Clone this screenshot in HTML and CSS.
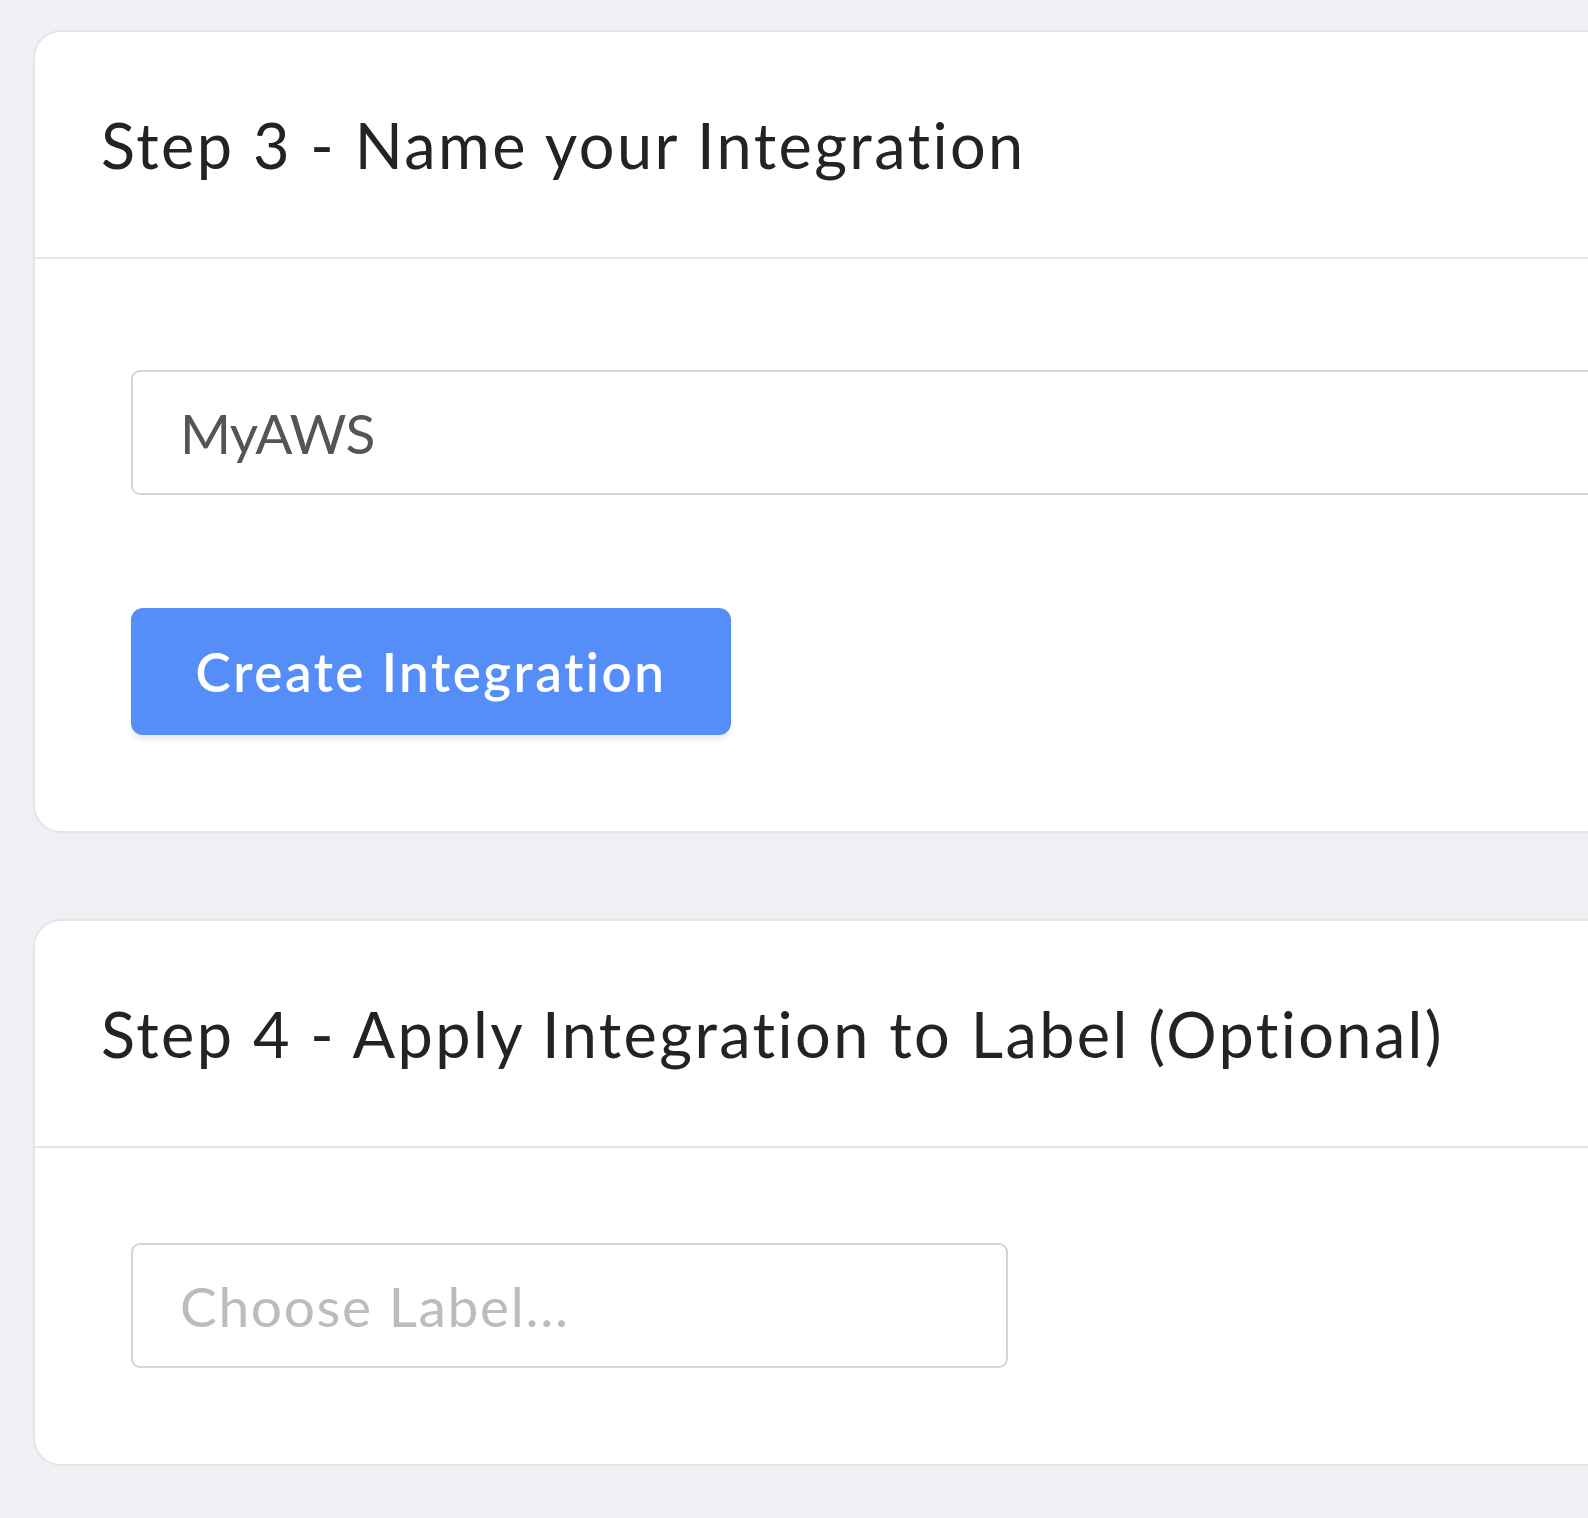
FILE: index.html
```html
<!DOCTYPE html>
<html lang="en">
<head>
<meta charset="utf-8">
<title>Integration</title>
<link rel="stylesheet" href="styles.css">
</head>
<body>
<div class="page">
  <section class="card">
    <header class="card-header">
      <h2 class="card-title">Step 3 - Name your Integration</h2>
    </header>
    <div class="card-body body-name">
      <div class="field field-wide">
        <span class="field-value">MyAWS</span>
      </div>
      <button class="btn-primary" type="button">Create Integration</button>
    </div>
  </section>
  <section class="card">
    <header class="card-header">
      <h2 class="card-title">Step 4 - Apply Integration to Label (Optional)</h2>
    </header>
    <div class="card-body body-label">
      <div class="field field-label">
        <span class="field-placeholder">Choose Label...</span>
      </div>
    </div>
  </section>
</div>
</body>
</html>
```
FILE: styles.css
```css
html, body {
  margin: 0;
  padding: 0;
}
body {
  background: #eff0f4;
  font-family: "Lato", "Liberation Sans", sans-serif;
  font-variant-ligatures: none;
  overflow: hidden;
  width: 1588px;
  height: 1518px;
}
.page {
  display: flex;
  flex-direction: column;
  gap: 86px;
  padding: 30px 0 0 33px;
}
.card {
  width: 1640px;
  background: #ffffff;
  border: 2px solid #e4e5e8;
  border-radius: 28px;
  box-sizing: border-box;
}
.card-header {
  height: 225px;
  display: flex;
  align-items: center;
  padding-left: 66px;
  border-bottom: 2px solid #e4e5e8;
}
.card-title {
  margin: 0;
  font-size: 63px;
  font-weight: 400;
  color: #222326;
  letter-spacing: 2.4px;
  font-variant-ligatures: none;
}
.card-body {
  padding: 0 0 96px 96px;
  display: flex;
  flex-direction: column;
  align-items: flex-start;
}
.body-name {
  padding-top: 111px;
  gap: 113px;
}
.body-label {
  padding-top: 95px;
}
.field {
  height: 125px;
  box-sizing: border-box;
  border: 2px solid #d5d5d7;
  border-radius: 9px;
  display: flex;
  align-items: center;
  padding-left: 47px;
  font-size: 55px;
}
.field-wide {
  width: 1520px;
}
.field-label {
  width: 877px;
}
.field-value {
  color: #555555;
  letter-spacing: -0.6px;
}
.field-placeholder {
  color: #bcbcbc;
  letter-spacing: 1.7px;
}
.btn-primary {
  width: 600px;
  height: 127px;
  border: none;
  border-radius: 12px;
  background: #568ef9;
  color: #ffffff;
  font-family: "Lato", "Liberation Sans", sans-serif;
  font-variant-ligatures: none;
  font-size: 53px;
  font-weight: 600;
  letter-spacing: 2.5px;
  box-shadow: 0 5px 5px rgba(0, 0, 0, 0.07);
  padding: 0;
}
```
